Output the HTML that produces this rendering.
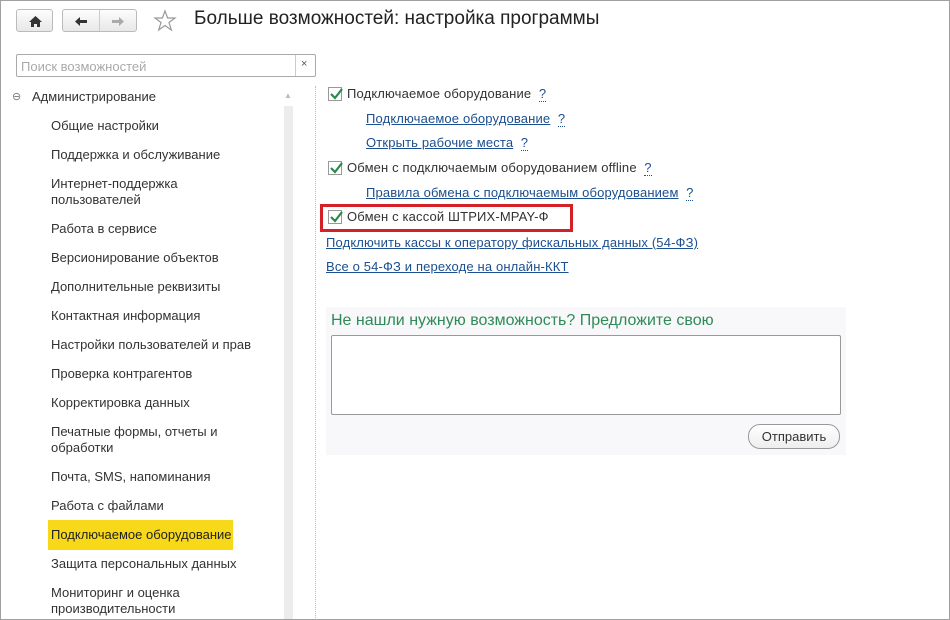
<!DOCTYPE html>
<html><head><meta charset="utf-8"><style>
*{margin:0;padding:0;box-sizing:border-box}
body{width:950px;height:620px;background:#fff;font-family:"Liberation Sans",sans-serif;font-size:13px;color:#333;position:relative;overflow:hidden}
.frame{position:absolute;left:0;top:0;width:950px;height:620px;border:1px solid #a0a0a0;pointer-events:none}
.a{position:absolute;white-space:nowrap}
.btn{position:absolute;border:1px solid #bbb;border-radius:3px;background:linear-gradient(#fdfdfd,#e8e8e8)}
.lnk{color:#1c4f8f;text-decoration:underline}
.q{color:#1c4f8f;border-bottom:1px dotted #1c4f8f;line-height:12px}
.cb{position:absolute;width:14px;height:14px;border:1px solid #999;background:#fff}
.cb svg{position:absolute;left:0;top:-2px}
.r{letter-spacing:0.15px}
</style></head><body>
<div class="btn" style="left:16px;top:9px;width:37px;height:23px"><svg width="37" height="23"><path d="M18.5 6 L12 12 H14 V17 H17 V14 H20 V17 H23 V12 H25 Z" fill="#333"/></svg></div>
<div class="btn" style="left:62px;top:9px;width:75px;height:23px"><div style="position:absolute;left:36px;top:0;width:1px;height:21px;background:#ccc"></div>
<svg width="75" height="23"><path d="M12 11.5 L17 7 V10 H24 V13 H17 V16 Z" fill="#333"/><path d="M61 11.5 L56 7 V10 H49 V13 H56 V16 Z" fill="#aaa"/></svg></div>
<svg class="a" style="left:153px;top:9px" width="24" height="23"><path d="M12 2 L14.6 9 H22 L16 13.5 L18.3 21 L12 16.5 L5.7 21 L8 13.5 L2 9 H9.4 Z" fill="none" stroke="#999" stroke-width="1.2"/></svg>
<div class="a" style="left:194px;top:8px;font-size:19px;color:#222">Больше возможностей: настройка программы</div>
<div class="a" style="left:16px;top:54px;width:300px;height:23px;border:1px solid #aaa;border-radius:2px"><span style="position:absolute;left:4px;top:4px;color:#aaa">Поиск возможностей</span><div style="position:absolute;left:278px;top:0;width:1px;height:21px;background:#ccc"></div><span style="position:absolute;left:284px;top:3px;font-size:11px;color:#555">×</span></div>
<div class="a" style="left:284px;top:106px;width:9px;height:514px;background:#ececec"></div>
<div class="a" style="left:284px;top:91px;color:#bbb;font-size:8px">▲</div>
<div class="a" style="left:315px;top:86px;height:534px;border-left:1px dotted #bbb"></div>
<div class="a" style="left:12px;top:90px;font-size:11px;color:#777">⊖</div>
<div class="a" style="left:32px;top:89px">Администрирование</div>
<div class="a" style="left:48px;top:520px;width:185px;height:30px;background:#f7d91a"></div>
<div class="a" style="left:51px;top:118px;line-height:16px;color:#333">
<div style="position:absolute;top:0">Общие настройки</div>
<div style="position:absolute;top:29px">Поддержка и обслуживание</div>
<div style="position:absolute;top:58px">Интернет-поддержка<br>пользователей</div>
<div style="position:absolute;top:103px">Работа в сервисе</div>
<div style="position:absolute;top:132px">Версионирование объектов</div>
<div style="position:absolute;top:161px">Дополнительные реквизиты</div>
<div style="position:absolute;top:190px">Контактная информация</div>
<div style="position:absolute;top:219px">Настройки пользователей и прав</div>
<div style="position:absolute;top:248px">Проверка контрагентов</div>
<div style="position:absolute;top:277px">Корректировка данных</div>
<div style="position:absolute;top:306px">Печатные формы, отчеты и<br>обработки</div>
<div style="position:absolute;top:351px">Почта, SMS, напоминания</div>
<div style="position:absolute;top:380px">Работа с файлами</div>
<div style="position:absolute;top:409px;color:#222">Подключаемое оборудование</div>
<div style="position:absolute;top:438px">Защита персональных данных</div>
<div style="position:absolute;top:467px">Мониторинг и оценка<br>производительности</div>
</div>
<div class="cb" style="left:328px;top:87px"><svg width="16" height="16"><path d="M2 8 L6 12 L13 3" fill="none" stroke="#2a8a4a" stroke-width="2.2"/></svg></div>
<div class="a r" style="left:347px;top:86px">Подключаемое оборудование &nbsp;<span class="q">?</span></div>
<div class="a r" style="left:366px;top:111px"><span class="lnk">Подключаемое оборудование</span> &nbsp;<span class="q">?</span></div>
<div class="a r" style="left:366px;top:135px"><span class="lnk">Открыть рабочие места</span> &nbsp;<span class="q">?</span></div>
<div class="cb" style="left:328px;top:161px"><svg width="16" height="16"><path d="M2 8 L6 12 L13 3" fill="none" stroke="#2a8a4a" stroke-width="2.2"/></svg></div>
<div class="a r" style="left:347px;top:160px">Обмен с подключаемым оборудованием offline &nbsp;<span class="q">?</span></div>
<div class="a r" style="left:366px;top:185px"><span class="lnk">Правила обмена с подключаемым оборудованием</span> &nbsp;<span class="q">?</span></div>
<div class="a" style="left:320px;top:204px;width:253px;height:28px;border:3px solid #d42027"></div>
<div class="cb" style="left:328px;top:210px"><svg width="16" height="16"><path d="M2 8 L6 12 L13 3" fill="none" stroke="#2a8a4a" stroke-width="2.2"/></svg></div>
<div class="a r" style="left:347px;top:209px">Обмен с кассой ШТРИХ-МPAY-Ф</div>
<div class="a r" style="left:326px;top:235px"><span class="lnk">Подключить кассы к оператору фискальных данных (54-ФЗ)</span></div>
<div class="a r" style="left:326px;top:259px"><span class="lnk">Все о 54-ФЗ и переходе на онлайн-ККТ</span></div>
<div class="a" style="left:326px;top:307px;width:520px;height:148px;background:#f8f8fa"></div>
<div class="a" style="left:331px;top:312px;font-size:16px;color:#2e8b57">Не нашли нужную возможность? Предложите свою</div>
<div class="a" style="left:331px;top:335px;width:510px;height:80px;background:#fff;border:1px solid #999;border-radius:2px"></div>
<div class="a" style="left:748px;top:424px;width:92px;height:25px;border:1px solid #999;border-radius:12px;background:linear-gradient(#fff,#eee);text-align:center;line-height:23px">Отправить</div>
<div class="frame"></div>
</body></html>
